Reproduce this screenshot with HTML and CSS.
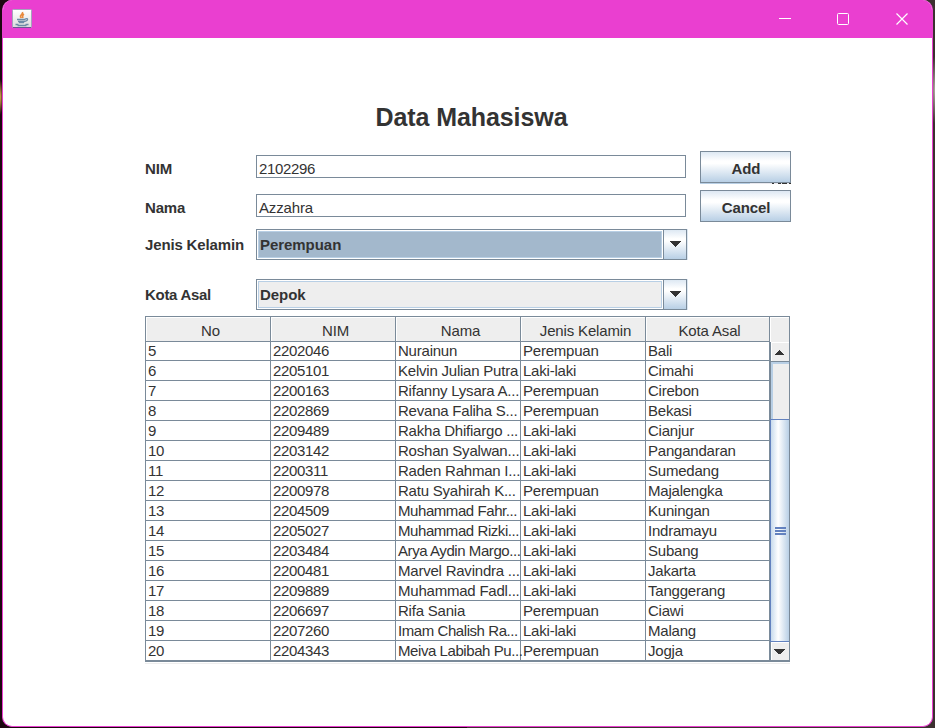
FILE: index.html
```html
<!DOCTYPE html>
<html lang="id">
<head>
<meta charset="utf-8">
<title>Data Mahasiswa</title>
<link rel="stylesheet" href="styles.css">
</head>
<body>
<div class="window">
  <header class="titlebar">
    <svg class="java" width="20" height="20" viewBox="0 0 20 20">
      <defs><linearGradient id="tile" x2="0" y2="1"><stop stop-color="#fff"/><stop offset="1" stop-color="#dcdcdc"/></linearGradient></defs>
      <rect x=".5" y=".5" width="19" height="18" rx="1" fill="url(#tile)" stroke="#a5a3bd"/>
      <path d="M1 18.500h18" stroke="#6d5795"/>
      <path d="M10.500 3c1 2-3 3-2 5l1 1M12 5c-2 1-2 2-1 4" fill="none" stroke="#e98a3c" stroke-width="1.600"/>
      <path d="M5 10.500h8.500M6 12.500h7M7 13.500h5M3.500 15.500h3m-1 1h9m-1-1h3M13 10c3.500-1.500 3.500 1.500 0 2.500" fill="none" stroke="#6d8ba6" stroke-width="1.300"/>
    </svg>
    <svg class="controls" width="130" height="12" viewBox="0 0 130 12" fill="none" stroke="#fff">
      <path d="M0 5.500h12"/>
      <rect x="58.500" y=".5" width="11" height="11" rx="1"/>
      <path stroke-width="1.200" d="M117.500.5l11 11m0-11l-11 11"/>
    </svg>
  </header>
  <main class="content">
    <h1>Data Mahasiswa</h1>
    <div class="form">
      <div class="fields">
        <label>NIM</label><div class="input">2102296</div>
        <label>Nama</label><div class="input name">Azzahra</div>
        <label>Jenis Kelamin</label>
        <div class="combo selected"><div class="value">Perempuan</div><div class="drop"><svg width="12" height="6" shape-rendering="crispEdges"><path d="M0 0h12l-6 6z"/></svg></div></div>
        <label class="city">Kota Asal</label>
        <div class="combo"><div class="value">Depok</div><div class="drop"><svg width="12" height="6" shape-rendering="crispEdges"><path d="M0 0h12l-6 6z"/></svg></div></div>
      </div>
      <div class="buttons">
        <div class="button">Add</div>
        <svg class="remnant" width="91" height="7" shape-rendering="crispEdges"><path fill="#b8cfe5" d="M0 0h50v1H0z"/><path fill="#e8e8ee" d="M50 0h41v1H50z"/><path fill="#333" d="M72 0h2v1h-2zM78 0h3v1h-3zM82 0h5v1h-5zM89 0h2v1h-2z"/></svg>
        <div class="button">Cancel</div>
      </div>
    </div>
    <div class="tablewrap">
      <div class="head"><span>No</span><span>NIM</span><span>Nama</span><span>Jenis Kelamin</span><span>Kota Asal</span><span></span></div>
      <div class="body">
        <div class="rows">
          <div class="row"><span>5</span><span>2202046</span><span>Nurainun</span><span>Perempuan</span><span>Bali</span></div>
          <div class="row"><span>6</span><span>2205101</span><span>Kelvin Julian Putra</span><span>Laki-laki</span><span>Cimahi</span></div>
          <div class="row"><span>7</span><span>2200163</span><span>Rifanny Lysara A...</span><span>Perempuan</span><span>Cirebon</span></div>
          <div class="row"><span>8</span><span>2202869</span><span>Revana Faliha S...</span><span>Perempuan</span><span>Bekasi</span></div>
          <div class="row"><span>9</span><span>2209489</span><span>Rakha Dhifiargo ...</span><span>Laki-laki</span><span>Cianjur</span></div>
          <div class="row"><span>10</span><span>2203142</span><span>Roshan Syalwan...</span><span>Laki-laki</span><span>Pangandaran</span></div>
          <div class="row"><span>11</span><span>2200311</span><span>Raden Rahman I...</span><span>Laki-laki</span><span>Sumedang</span></div>
          <div class="row"><span>12</span><span>2200978</span><span>Ratu Syahirah K...</span><span>Perempuan</span><span>Majalengka</span></div>
          <div class="row"><span>13</span><span>2204509</span><span class="tight">Muhammad Fahr...</span><span>Laki-laki</span><span>Kuningan</span></div>
          <div class="row"><span>14</span><span>2205027</span><span class="tight">Muhammad Rizki...</span><span>Laki-laki</span><span>Indramayu</span></div>
          <div class="row"><span>15</span><span>2203484</span><span class="tight">Arya Aydin Margo...</span><span>Laki-laki</span><span>Subang</span></div>
          <div class="row"><span>16</span><span>2200481</span><span>Marvel Ravindra ...</span><span>Laki-laki</span><span>Jakarta</span></div>
          <div class="row"><span>17</span><span>2209889</span><span>Muhammad Fadl...</span><span>Laki-laki</span><span>Tanggerang</span></div>
          <div class="row"><span>18</span><span>2206697</span><span>Rifa Sania</span><span>Perempuan</span><span>Ciawi</span></div>
          <div class="row"><span>19</span><span>2207260</span><span class="tight">Imam Chalish Ra...</span><span>Laki-laki</span><span>Malang</span></div>
          <div class="row"><span>20</span><span>2204343</span><span class="tight">Meiva Labibah Pu...</span><span>Perempuan</span><span>Jogja</span></div>
        </div>
        <div class="scrollbar">
          <div class="arrow"><svg width="10" height="5" shape-rendering="crispEdges"><path d="M0 5h10l-5-5z"/></svg></div>
          <div class="track"></div>
          <div class="thumb"><i></i><i></i><i></i></div>
          <div class="arrow down"><svg width="12" height="5" shape-rendering="crispEdges"><path d="M0 0h12l-6 6z"/></svg></div>
        </div>
      </div>
    </div>
  </main>
</div>
</body>
</html>
```
FILE: styles.css
```css
* { box-sizing: border-box; }
body {
  margin: 0;
  width: 935px;
  height: 728px;
  overflow: hidden;
  padding: 0 2px 1px;
  background:
    radial-gradient(ellipse 3px 18px at 0 97px, #e5b24f, transparent) no-repeat,
    radial-gradient(ellipse 5px 34px at 935px 90px, #b5aaa4, transparent) no-repeat,
    linear-gradient(90deg, #1d0710 50%, #3c3030 50%);
  font: 15px/20px "Liberation Sans", Arial, sans-serif;
  color: #333;
}
.window {
  height: 727px;
  width: 931px;
  border: 1px solid #ea3fd0;
  border-top: 0;
  border-radius: 10px;
  overflow: hidden;
  background: #fff;
}
.titlebar {
  height: 38px;
  display: flex;
  justify-content: space-between;
  background: #ea3fd0;
  padding: 9px 23px 0 9px;
}
.controls { margin-top: 4px; }
.content { padding: 64px 0 0 142px; }
h1 { margin: 0; width: 653px; height: 49px; font-size: 25px; line-height: 31px; text-align: center; letter-spacing: -0.08px; }
.form { display: flex; gap: 13px; height: 165px; }
.fields {
  display: grid;
  grid-template-columns: 111px 431px;
  grid-template-rows: 39px 35px 50px 31px;
  align-content: start;
  padding-top: 4px;
  font-weight: bold;
  letter-spacing: -0.15px;
}
label { line-height: 27px; white-space: nowrap; }
label:nth-of-type(n+3) { line-height: 31px; }
.city { letter-spacing: -0.3px; }
.input {
  width: 430px;
  height: 23px;
  border: 1px solid #7a8a99;
  padding-left: 2px;
  line-height: 26px;
  font-weight: normal;
  letter-spacing: -0.33px;
}
.name { letter-spacing: -0.15px; }
.combo { height: 31px; display: flex; border: 1px solid #7a8a99; box-shadow: 1px 0 #dce7f2; }
.value { flex: 1; margin: 1px; border: 1px solid #b8cfe5; background: #eee; padding-left: 1px; line-height: 27px; letter-spacing: -0.05px; }
.selected .value { background: #a3b8cc; }
.value { line-height: 26px; }
.drop {
  width: 23px;
  display: flex;
  align-items: center;
  padding-left: 5px;
  border-left: 1px solid #7a8a99;
}
.drop svg { margin-top: -1px; }
.drop, .button { background: linear-gradient(#dde8f3, #fff 30%, #fff 38%, #b8cfe5); }
.drop svg, .arrow svg { fill: #333; }
.button { width: 91px; height: 32px; border: 1px solid #7a8a99; font-weight: bold; text-align: center; line-height: 34px; padding-left: 1px; letter-spacing: -0.1px; }
.remnant { display: block; }
.tablewrap { width: 645px; height: 346px; border: solid #7a8a99; border-width: 1px 1px 2px; box-shadow: 0 1px #fff, 0 2px #eee; }
.head { display: grid; grid-template-columns: repeat(4, 125px) 124px 19px; height: 25px; border-bottom: 1px solid #7a8a99; line-height: 25px; text-align: center; letter-spacing: -0.15px; }
.head span { height: 24px; background: #eee; border: solid #fff; border-width: 1px 0 0 1px; box-shadow: 1px 0 #7a8a99; margin-right: 1px; padding-left: 4px; }
.head span:nth-child(5) { padding-left: 3px; }
.head span:last-child { box-shadow: none; margin: 0; height: 25px; }
.body { display: flex; height: 318px; overflow: hidden; }
.rows { width: 624px; margin-top: -1px; letter-spacing: -0.22px; }
.row { display: grid; grid-template-columns: repeat(4, 125px) 124px; height: 20px; line-height: 20px; border-bottom: 1px solid #7a8a99; }
.row span { padding-left: 2px; white-space: nowrap; border-right: 1px solid #7a8a99; }
.row span:nth-child(2) { letter-spacing: -0.33px; }
.row span.tight { letter-spacing: -0.43px; }
.scrollbar { width: 19px; border-left: 1px solid #7a8a99; display: flex; flex-direction: column; }
.arrow { height: 19px; display: flex; align-items: center; padding-left: 3px; background: #eee; border: solid #fff; border-width: 1px 0 0 1px; }
.arrow svg { margin-left: -1px; }
.arrow.down { height: 18px; padding-left: 2px; }
.track { height: 58px; background: #eee; border-top: 1px solid #7a8a99; box-shadow: inset 2px 2px #b8cfe5; }
.thumb { height: 223px; margin-left: -1px; border: solid #6382bf; border-width: 1px 0 1px 1px; background: linear-gradient(90deg, #c8dbed, #fff 40%, #b8cfe5); display: flex; flex-direction: column; align-items: center; justify-content: center; gap: 1px; }
.thumb i { width: 11px; height: 2px; background: #6382bf; }
```
